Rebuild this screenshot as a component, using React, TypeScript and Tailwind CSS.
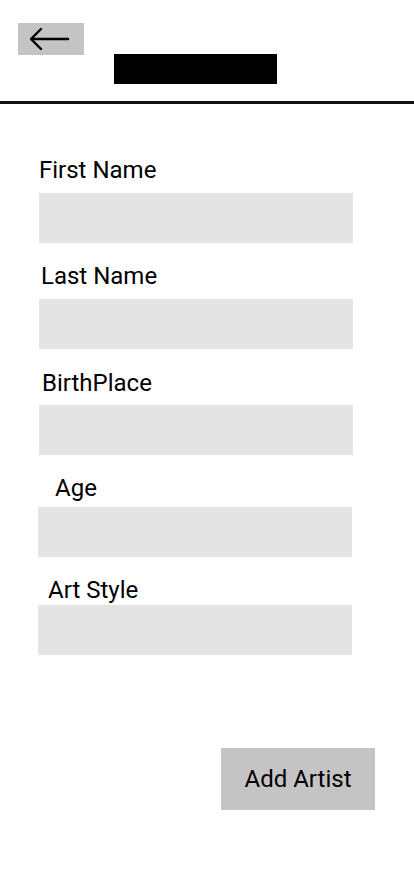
const fields = [
  { label: 'First Name', labelClass: 'mt-[53px] ml-[39px]', inputClass: 'mt-[10px] ml-[39px]' },
  { label: 'Last Name', labelClass: 'mt-[20px] ml-[41px]', inputClass: 'mt-[10px] ml-[39px]' },
  { label: 'BirthPlace', labelClass: 'mt-[21px] ml-[42px]', inputClass: 'mt-[9px] ml-[39px]' },
  { label: 'Age', labelClass: 'mt-[20px] ml-[55px]', inputClass: 'mt-[6px] ml-[38px]' },
  { label: 'Art Style', labelClass: 'mt-[20px] ml-[48px]', inputClass: 'mt-[2px] ml-[38px]' },
];

export default function App() {
  return (
    <div className="w-[414px] min-h-[896px] bg-white text-black font-['Roboto',sans-serif]">
      <header className="flex flex-col">
        <button className="mt-[23px] ml-[18px] w-[66px] h-[32px] bg-[#c4c4c4] flex items-center pl-[12px]">
          <svg width="40" height="22" viewBox="0 0 40 22" fill="none" stroke="black" strokeWidth="2.4" strokeLinecap="round" strokeLinejoin="round">
            <path d="M1 11H38" />
            <path d="M11 1L1 11L11 21" />
          </svg>
        </button>
        <div className="mt-[-1px] ml-[114px] w-[163px] h-[30px] bg-black" />
        <div className="mt-[17px] h-[3px] bg-[#111]" />
      </header>

      <form className="flex flex-col">
        {fields.map((f) => (
          <div key={f.label} className="flex flex-col">
            <label className={`${f.labelClass} text-[24px] leading-[26px] font-normal`}>{f.label}</label>
            <div className={`${f.inputClass} w-[314px] h-[50px] bg-[#e4e4e4]`} />
          </div>
        ))}
        <button
          type="button"
          className="mt-[93px] ml-[221px] w-[154px] h-[62px] bg-[#c4c4c4] text-[24px] font-normal"
        >
          Add Artist
        </button>
      </form>
    </div>
  );
}
